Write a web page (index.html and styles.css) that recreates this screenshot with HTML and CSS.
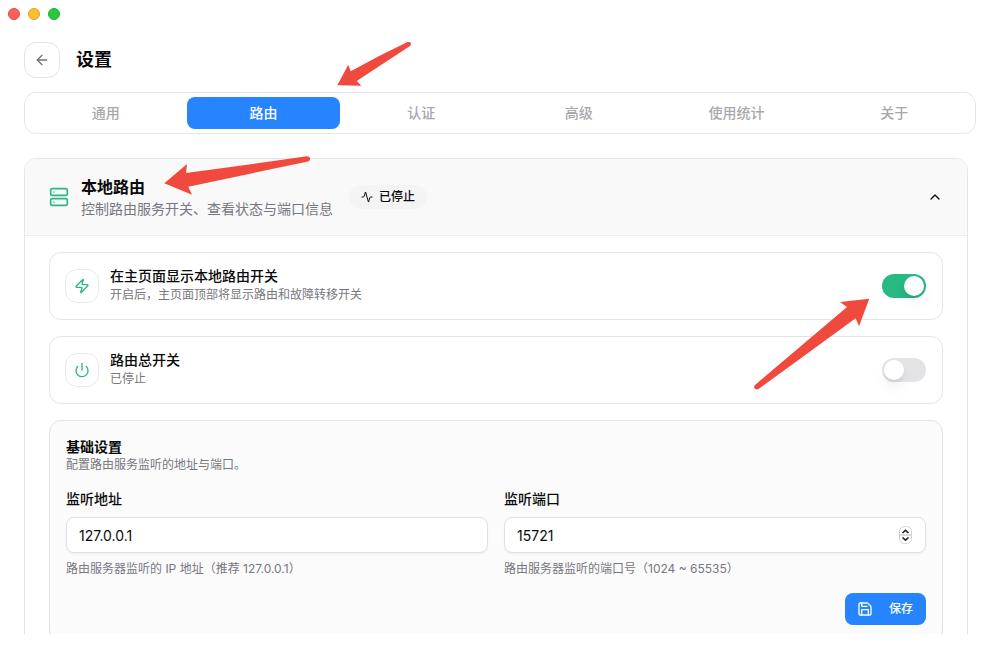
FILE: index.html
```
<!DOCTYPE html>
<html lang="zh-CN">

<head>
    <meta charset="UTF-8">
    <meta name="viewport" content="width=device-width, initial-scale=1.0">
    <title>设置</title>
    <link rel="stylesheet" href="styles.css">
</head>

<body>
    <div class="titlebar">
        <span class="light light-close"></span>
        <span class="light light-min"></span>
        <span class="light light-max"></span>
    </div>

    <header class="page-header">
        <button type="button" class="back" aria-label="返回">
            <svg class="icon" width="16" height="16" viewBox="0 0 24 24"><path d="m12 19-7-7 7-7"/><path d="M19 12H5"/></svg>
        </button>
        <h1>设置</h1>
    </header>

    <nav class="tabs">
        <button type="button" class="tab">通用</button>
        <button type="button" class="tab active">路由</button>
        <button type="button" class="tab">认证</button>
        <button type="button" class="tab">高级</button>
        <button type="button" class="tab">使用统计</button>
        <button type="button" class="tab">关于</button>
    </nav>

    <main class="scroll">
        <section class="panel">
            <div class="panel-header">
                <svg class="icon green" width="20" height="20" viewBox="0 0 24 24"><rect x="2" y="2" width="20" height="8" rx="2"/><rect x="2" y="14" width="20" height="8" rx="2"/><path d="M6 6h.01M6 18h.01"/></svg>
                <div class="panel-title">
                    <h2>本地路由</h2>
                    <p>控制路由服务开关、查看状态与端口信息</p>
                </div>
                <span class="badge">
                    <svg class="icon" width="12" height="12" viewBox="0 0 24 24"><path d="M22 12h-2.48a2 2 0 0 0-1.93 1.46l-2.35 8.36a.25.25 0 0 1-.48 0L9.24 2.18a.25.25 0 0 0-.48 0l-2.35 8.36A2 2 0 0 1 4.49 12H2"/></svg>
                    已停止
                </span>
                <button type="button" class="collapse" aria-label="收起">
                    <svg class="icon" width="16" height="16" viewBox="0 0 24 24"><path d="m18 15-6-6-6 6"/></svg>
                </button>
            </div>

            <div class="panel-body">
                <div class="item">
                    <span class="item-icon">
                        <svg class="icon green" width="16" height="16" viewBox="0 0 24 24"><path d="M4 14a1 1 0 0 1-.78-1.63l9.9-10.2a.5.5 0 0 1 .86.46l-1.92 6.02A1 1 0 0 0 13 10h7a1 1 0 0 1 .78 1.63l-9.9 10.2a.5.5 0 0 1-.86-.46l1.92-6.02A1 1 0 0 0 11 14z"/></svg>
                    </span>
                    <div class="item-text">
                        <label for="show-switch">在主页面显示本地路由开关</label>
                        <p>开启后，主页面顶部将显示路由和故障转移开关</p>
                    </div>
                    <input type="checkbox" class="switch" id="show-switch" checked>
                </div>

                <div class="item">
                    <span class="item-icon">
                        <svg class="icon green" width="16" height="16" viewBox="0 0 24 24"><path d="M12 2v10"/><path d="M18.4 6.6a9 9 0 1 1-12.77.04"/></svg>
                    </span>
                    <div class="item-text">
                        <label for="main-switch">路由总开关</label>
                        <p>已停止</p>
                    </div>
                    <input type="checkbox" class="switch" id="main-switch">
                </div>

                <form class="basic">
                    <div>
                        <h3>基础设置</h3>
                        <p>配置路由服务监听的地址与端口。</p>
                    </div>
                    <div class="fields">
                        <div class="field">
                            <label for="address">监听地址</label>
                            <input type="text" id="address" value="127.0.0.1">
                            <p>路由服务器监听的 IP 地址（推荐 127.0.0.1）</p>
                        </div>
                        <div class="field">
                            <label for="port">监听端口</label>
                            <div class="number">
                                <input type="number" id="port" value="15721" min="1024" max="65535">
                                <svg class="stepper" width="13" height="19" viewBox="0 0 13 19">
                                    <rect x=".5" y=".5" width="12" height="17" rx="5" fill="#fff" stroke="#d4d4d4"/>
                                    <path d="M1 9h11" stroke="#dcdcdc" stroke-width="2"/>
                                    <path d="M3.500 7 6.500 4.300 9.500 7M3.500 11.500l3 2.700 3-2.700" fill="none" stroke="#222" stroke-width="1.600"/>
                                </svg>
                            </div>
                            <p>路由服务器监听的端口号（1024 ~ 65535）</p>
                        </div>
                    </div>
                    <button type="button" class="save">
                        <svg class="icon" width="16" height="16" viewBox="0 0 24 24"><path d="M15.2 3a2 2 0 0 1 1.400.6l3.800 3.800a2 2 0 0 1 .6 1.400V19a2 2 0 0 1-2 2H5a2 2 0 0 1-2-2V5a2 2 0 0 1 2-2z"/><path d="M17 21v-7a1 1 0 0 0-1-1H8a1 1 0 0 0-1 1v7"/><path d="M7 3v4a1 1 0 0 0 1 1h7"/></svg>
                        保存
                    </button>
                </form>
            </div>
        </section>
    </main>

    <!-- Red pointer arrows -->
    <svg class="arrow arrow-tab" width="76" height="46" viewBox="0 0 76 46"><path d="M1.300 43.300 12.300 22.700 14.700 29.300Q42 14 71 .3C74-1 76.500 1.500 74 4L20.700 39 25.300 43.700Z"/></svg>
    <svg class="arrow arrow-title" width="148" height="40" viewBox="0 0 148 40"><path d="M1.300 28.300 24 9 23 18Q84 10 143.500 1.300C147.500.8 148.500 5.500 145 6.500L25.300 31.700 29 39.700Z"/></svg>
    <svg class="arrow arrow-switch" width="118" height="94" viewBox="0 0 118 94"><path d="M116.300 2.700 87 6 94 11 2 89C-.5 91.500 2.500 94.500 5.500 93L102.700 22.300 106 30.300Z"/></svg>
</body>

</html>
```
FILE: styles.css
```
* {
    box-sizing: border-box;
}

body {
    margin: 0;
    height: 100vh;
    padding: 0 24px 16px;
    display: flex;
    flex-direction: column;
    font-family: Inter, "Noto Sans CJK SC", sans-serif;
    font-size: 14px;
    line-height: 20px;
    color: #0a0a0b;
    background-color: #fff;
    position: relative;
    overflow: hidden;
}

h1, h2, h3, p {
    margin: 0;
}

button, input {
    font: inherit;
    color: inherit;
}

button {
    border: none;
    padding: 0;
    background: none;
    cursor: pointer;
}

p {
    font-size: 12px;
    line-height: 16px;
    color: #777780;
}

.icon {
    display: block;
    flex: none;
    fill: none;
    stroke: currentColor;
    stroke-width: 2;
    stroke-linecap: round;
    stroke-linejoin: round;
}

.green {
    color: #26b981;
}

/* Window buttons */
.titlebar {
    display: flex;
    gap: 8px;
    padding: 8px 0;
    margin-left: -16px;
}

.light {
    width: 12px;
    height: 12px;
    border-radius: 50%;
    border: 1px solid;
}

.light-close {
    background-color: #ff5f57;
    border-color: #e2463f;
}

.light-min {
    background-color: #febc2e;
    border-color: #dfa023;
}

.light-max {
    background-color: #28c840;
    border-color: #1dad2b;
}

.page-header {
    display: flex;
    align-items: center;
    gap: 16px;
    padding: 14px 0;
}

.page-header h1 {
    font-size: 18px;
    line-height: 28px;
    font-weight: 600;
}

.back {
    width: 36px;
    height: 36px;
    display: flex;
    align-items: center;
    justify-content: center;
    border: 1px solid #e4e4e7;
    border-radius: 12px;
    color: #71717a;
}

/* Tabs */
.tabs {
    flex: none;
    display: grid;
    grid-template-columns: repeat(6, 1fr);
    gap: 4px;
    padding: 4px;
    border: 1px solid #e6e6e8;
    border-radius: 12px;
    margin-bottom: 24px;
}

.tab {
    height: 32px;
    border-radius: 8px;
    color: #a8a8ad;
    font-weight: 500;
}

.tab.active {
    background-color: #2684ff;
    color: #fff;
}

/* Panel */
.scroll {
    flex: 1;
    min-height: 0;
    padding-right: 8px;
    overflow-y: auto;
    scrollbar-width: none;
}

.panel {
    border: 1px solid #e6e6e8;
    border-radius: 12px;
    overflow: hidden;
}

.panel-header {
    display: flex;
    align-items: center;
    gap: 12px;
    padding: 16px 24px;
    border-bottom: 1px solid #ededef;
    background-color: #f9f9f9;
}

.panel-title h2 {
    font-size: 16px;
    line-height: 24px;
    font-weight: 600;
}

.panel-title p {
    font-size: 14px;
    line-height: 20px;
}

.badge {
    display: flex;
    align-items: center;
    gap: 6px;
    margin-left: 4px;
    padding: 4px 12px;
    border-radius: 12px;
    background-color: #f4f4f5;
    font-size: 12px;
    line-height: 16px;
    font-weight: 500;
}

.collapse {
    margin-left: auto;
}

.panel-body {
    display: flex;
    flex-direction: column;
    gap: 16px;
    padding: 16px 24px;
}

.item {
    display: flex;
    align-items: center;
    gap: 11px;
    min-height: 68px;
    padding: 0 16px 0 15px;
    border: 1px solid #e4e4e7;
    border-radius: 12px;
}

.item-icon {
    width: 34px;
    height: 34px;
    display: flex;
    align-items: center;
    justify-content: center;
    border: 1px solid #e9e9eb;
    border-radius: 12px;
}

.item-text {
    flex: 1;
    padding-bottom: 3px;
}

.item-text label {
    display: block;
    margin-bottom: 1px;
    font-weight: 500;
}

.switch {
    appearance: none;
    flex: none;
    width: 44px;
    height: 24px;
    margin: 0;
    padding: 2px;
    border-radius: 12px;
    background-color: #e4e4e7;
    cursor: pointer;
}

.switch::before {
    content: "";
    display: block;
    width: 20px;
    height: 20px;
    border-radius: 50%;
    background-color: #fff;
    box-shadow: 0 8px 15px -3px rgba(0, 0, 0, 0.1), 0 4px 6px -4px rgba(0, 0, 0, 0.2);
}

.switch:checked {
    background-color: #26b981;
}

.switch:checked::before {
    margin-left: auto;
}

/* Basic settings form */
.basic {
    display: flex;
    flex-direction: column;
    gap: 16px;
    padding: 16px;
    border: 1px solid #e4e4e7;
    border-radius: 12px;
    background-color: #fbfbfb;
}

.basic h3 {
    font-size: 14px;
    line-height: 20px;
    font-weight: 600;
}

.fields {
    display: grid;
    grid-template-columns: 1fr 1fr;
    gap: 16px;
}

.field {
    display: flex;
    flex-direction: column;
    gap: 8px;
}

.field label {
    font-weight: 500;
}

.field input {
    width: 100%;
    height: 36px;
    padding: 0 12px;
    border: 1px solid #e1e1e4;
    border-radius: 8px;
    background-color: #fff;
    box-shadow: 0 1px 2px rgba(0, 0, 0, 0.05);
    appearance: textfield;
}

.number {
    position: relative;
    height: 36px;
}

.stepper {
    position: absolute;
    top: 9px;
    right: 14px;
}

.save {
    align-self: flex-end;
    display: flex;
    align-items: center;
    gap: 16px;
    height: 32px;
    padding: 0 13px 0 12px;
    border-radius: 8px;
    background-color: #2684ff;
    color: #fff;
    font-size: 12px;
    font-weight: 500;
}

/* Arrows lie over the page */
.arrow {
    position: absolute;
    fill: #f04a3e;
    pointer-events: none;
}

.arrow-tab {
    left: 336px;
    top: 42px;
}

.arrow-title {
    left: 163px;
    top: 155px;
}

.arrow-switch {
    left: 753px;
    top: 296px;
}
```
